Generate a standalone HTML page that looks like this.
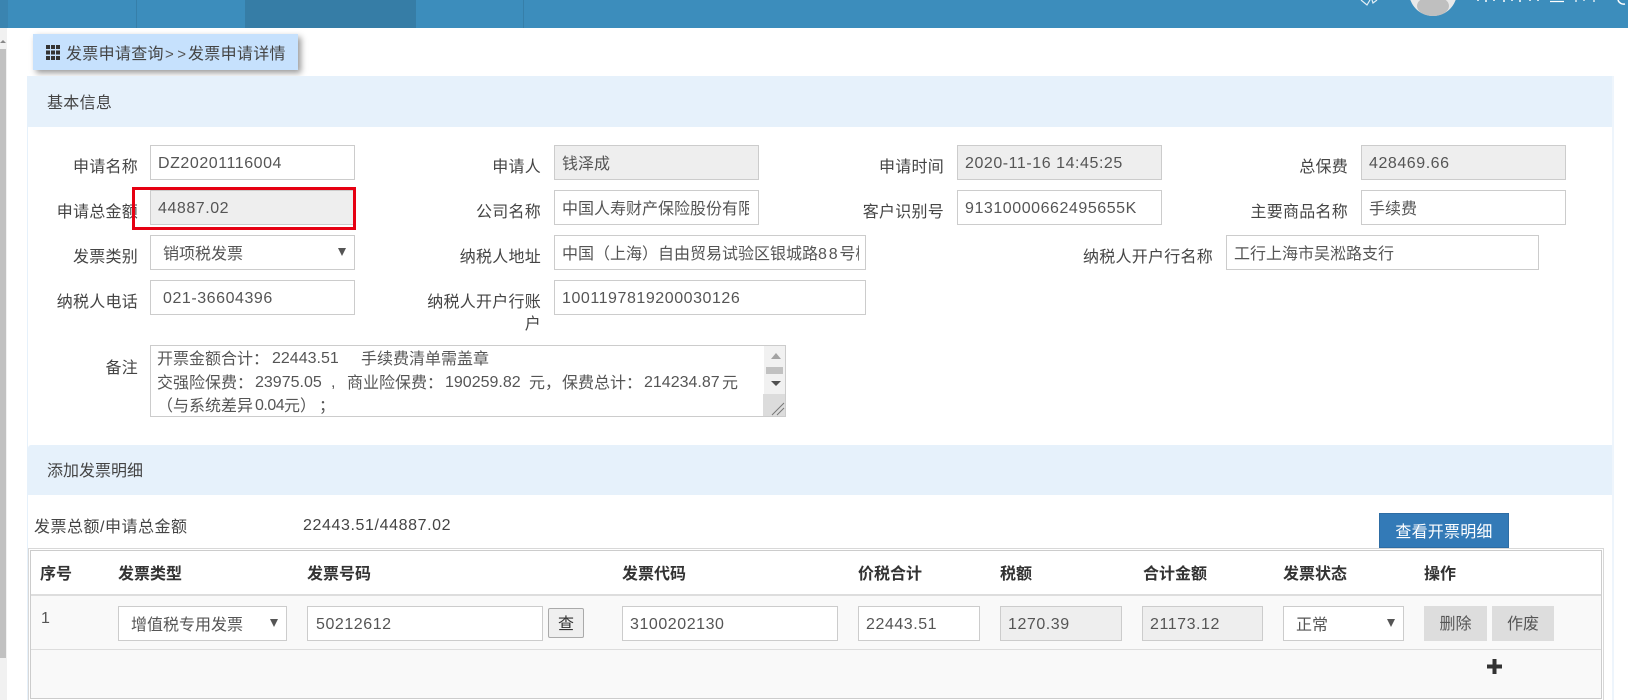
<!DOCTYPE html>
<html lang="zh-CN">
<head>
<meta charset="utf-8">
<title>发票申请详情</title>
<style>
html,body{margin:0;padding:0;background:#fff}
body{position:relative;width:1628px;height:700px;overflow:hidden;font:16px/24px "Liberation Sans","Noto Sans CJK SC",sans-serif;color:#444}
div,span{box-sizing:border-box}
.a{position:absolute}
.l{position:absolute;white-space:nowrap;text-align:right;height:35px;line-height:37px;color:#444;letter-spacing:.25px}
.i{position:absolute;height:35px;border:1px solid #ccc;background:#fff;color:#555;line-height:35px;padding-left:7px;white-space:nowrap;overflow:hidden}
.c{line-height:37px}
.g{background:#eee}
.n{letter-spacing:.55px}
.t{position:absolute;white-space:nowrap;color:#555;line-height:24px;height:24px}
.h{position:absolute;top:563px;line-height:24px;font-weight:bold;color:#333;white-space:nowrap}
.arr{position:absolute;width:0;height:0;border-left:4px solid transparent;border-right:4px solid transparent;border-top:8px solid #555}
.head{position:absolute;left:28px;width:1584px;background:#e6f1fb}
.btn{position:absolute;top:606px;height:35px;background:#ddd;color:#555;text-align:center;line-height:37px}
</style>
</head>
<body>
<!-- top bar -->
<div class="a" style="left:0;top:0;width:1628px;height:28px;background:#3c8dbc"></div>
<div class="a" style="left:0;top:0;width:8px;height:28px;background:#3a84b0"></div>
<div class="a" style="left:136px;top:0;width:1px;height:28px;background:#367fa9"></div>
<div class="a" style="left:245px;top:0;width:171px;height:28px;background:#367da6"></div>
<div class="a" style="left:523px;top:0;width:1px;height:28px;background:#367fa9"></div>
<svg class="a" style="left:1340px;top:0" width="288" height="28" viewBox="0 0 288 28">
  <path d="M21 0L27 5L30 0M32 0L33 3L37 0" fill="none" stroke="#e4eff6" stroke-width="1.2"/>
  <circle cx="93" cy="-8" r="24" fill="#e9e9e9"/>
  <ellipse cx="93" cy="6" rx="16" ry="10" fill="#bfbfbf"/>
  <path d="M138 0v1M146 0v2M154 0v1M164 0v2M172 0v1M180 0v2M190 0v1M198 0v1" stroke="#fff" stroke-width="1.5"/>
  <path d="M210 1.5h14M236 0v2M244 0v1M254 0v2" stroke="#fff" stroke-width="1.2" fill="none"/>
  <path d="M278 0a6 6 0 0 0 7 4" stroke="#fff" stroke-width="1.5" fill="none"/>
</svg>
<!-- left scrollbar -->
<div class="a" style="left:0;top:28px;width:7px;height:672px;background:#f1f1f1"></div>
<div class="a" style="left:0;top:49px;width:6px;height:609px;background:#c1c1c1"></div>
<div class="a" style="left:0;top:40px;width:0;height:0;border-left:3px solid transparent;border-right:3px solid transparent;border-bottom:3px solid #888"></div>
<!-- panel side borders -->
<div class="a" style="left:27px;top:76px;width:1px;height:624px;background:#e6f1fb"></div>
<div class="a" style="left:1612px;top:76px;width:2px;height:624px;background:#eef5fc"></div>
<!-- breadcrumb -->
<div class="a" style="left:33px;top:34px;width:265px;height:36px;background:#c6e1fd;box-shadow:3px 3px 6px rgba(0,0,0,.4)"></div>
<svg class="a" style="left:46px;top:45px" width="14" height="15" viewBox="0 0 14 15" fill="#333">
  <rect x="0" y="0" width="4" height="4"/><rect x="5" y="0" width="4" height="4"/><rect x="10" y="0" width="4" height="4"/>
  <rect x="0" y="5.5" width="4" height="4"/><rect x="5" y="5.5" width="4" height="4"/><rect x="10" y="5.5" width="4" height="4"/>
  <rect x="0" y="11" width="4" height="4"/><rect x="5" y="11" width="4" height="4"/><rect x="10" y="11" width="4" height="4"/>
</svg>
<div class="a" style="left:66px;top:43px;white-space:nowrap;color:#444;letter-spacing:.3px">发票申请查询</div>
<div class="a" style="left:165px;top:43px;white-space:nowrap;color:#555;font-size:15px;letter-spacing:3.5px">&gt;&gt;</div>
<div class="a" style="left:188px;top:43px;white-space:nowrap;color:#444;letter-spacing:.3px">发票申请详情</div>

<!-- section 1 -->
<div class="head" style="top:76px;height:51px"></div>
<div class="a" style="left:47px;top:92px;color:#444;letter-spacing:.3px">基本信息</div>

<!-- row 1 -->
<div class="l" style="right:1490px;top:149px">申请名称</div>
<div class="i n" style="left:150px;top:145px;width:205px">DZ20201116004</div>
<div class="l" style="right:1087px;top:149px">申请人</div>
<div class="i g c" style="left:554px;top:145px;width:205px">钱泽成</div>
<div class="l" style="right:684px;top:149px">申请时间</div>
<div class="i g n" style="left:957px;top:145px;width:205px">2020-11-16 14:45:25</div>
<div class="l" style="right:280px;top:149px">总保费</div>
<div class="i g n" style="left:1361px;top:145px;width:205px">428469.66</div>

<!-- row 2 -->
<div class="l" style="right:1490px;top:194px">申请总金额</div>
<div class="i g n" style="left:150px;top:190px;width:205px">44887.02</div>
<div class="l" style="right:1087px;top:194px">公司名称</div>
<div class="i c" style="left:554px;top:190px;width:205px"><span style="display:block;width:187px;overflow:hidden">中国人寿财产保险股份有限公司</span></div>
<div class="l" style="right:684px;top:194px">客户识别号</div>
<div class="i n" style="left:957px;top:190px;width:205px">91310000662495655K</div>
<div class="l" style="right:280px;top:194px">主要商品名称</div>
<div class="i c" style="left:1361px;top:190px;width:205px">手续费</div>

<!-- row 3 -->
<div class="l" style="right:1490px;top:239px">发票类别</div>
<div class="i c" style="left:150px;top:235px;width:205px;padding-left:12px">销项税发票</div>
<div class="arr" style="left:338px;top:248px"></div>
<div class="l" style="right:1087px;top:239px">纳税人地址</div>
<div class="i c" style="left:554px;top:235px;width:312px"><span style="display:block;width:297px;overflow:hidden">中国（上海）自由贸易试验区银城路<span style="letter-spacing:1.8px">88</span>号楼</span></div>
<div class="l" style="right:415px;top:239px">纳税人开户行名称</div>
<div class="i c" style="left:1226px;top:235px;width:313px">工行上海市吴淞路支行</div>

<!-- row 4 -->
<div class="l" style="right:1490px;top:284px">纳税人电话</div>
<div class="i n" style="left:150px;top:280px;width:205px;padding-left:12px">021-36604396</div>
<div class="a" style="right:1087px;top:292px;width:120px;text-align:right;line-height:22px;color:#444;letter-spacing:.25px">纳税人开户行账户</div>
<div class="i n" style="left:554px;top:280px;width:312px">1001197819200030126</div>

<!-- remark -->
<div class="l" style="right:1490px;top:350px">备注</div>
<div class="a" style="left:150px;top:345px;width:636px;height:72px;border:1px solid #ccc;background:#fff"></div>
<div class="t" style="left:157px;top:348px">开票金额合计：</div>
<div class="t" style="left:272px;top:347px">22443.51</div>
<div class="t" style="left:361px;top:348px">手续费清单需盖章</div>
<div class="t" style="left:157px;top:372px">交强险保费：</div>
<div class="t" style="left:255px;top:371px">23975.05</div>
<div class="t" style="left:331px;top:371px">,</div>
<div class="t" style="left:347px;top:372px">商业险保费：</div>
<div class="t" style="left:445px;top:371px">190259.82</div>
<div class="t" style="left:529px;top:372px">元，</div>
<div class="t" style="left:562px;top:372px">保费总计：</div>
<div class="t" style="left:644px;top:371px">214234.87</div>
<div class="t" style="left:722px;top:372px">元</div>
<div class="t" style="left:157px;top:395px">（与系统差异</div>
<div class="t" style="left:255px;top:394px;letter-spacing:-.5px">0.04</div>
<div class="t" style="left:284px;top:395px">元）</div>
<div class="t" style="left:319px;top:395px">；</div>
<div class="a" style="left:764px;top:346px;width:21px;height:48px;background:#f1f1f1"></div>
<div class="a" style="left:771px;top:353px;width:0;height:0;border-left:5px solid transparent;border-right:5px solid transparent;border-bottom:6px solid #a3a3a3"></div>
<div class="a" style="left:766px;top:367px;width:17px;height:7px;background:#c1c1c1"></div>
<div class="a" style="left:771px;top:381px;width:0;height:0;border-left:5px solid transparent;border-right:5px solid transparent;border-top:5px solid #505050"></div>
<svg class="a" style="left:763px;top:394px" width="22" height="22" viewBox="0 0 22 22">
  <rect width="22" height="22" fill="#dcdcdc"/>
  <path d="M9 21L21 9M14 21L21 14" stroke="#777" stroke-width="1" fill="none"/>
</svg>

<!-- section 2 -->
<div class="head" style="top:445px;height:50px;border-radius:3px 0 0 0"></div>
<div class="a" style="left:47px;top:460px;color:#444">添加发票明细</div>
<div class="a" style="left:34px;top:516px;white-space:nowrap;color:#444;letter-spacing:.5px">发票总额/申请总金额</div>
<div class="a" style="left:303px;top:514px;white-space:nowrap;color:#444;letter-spacing:.6px">22443.51/44887.02</div>

<!-- table -->
<div class="a" style="left:28px;top:548px;width:1576px;height:152px;border:1px solid #d8d8d8;border-bottom:0;background:#fff"></div>
<div class="a" style="left:30px;top:550px;width:1572px;height:149px;border:1px solid #ccc;background:#fff"></div>
<div class="a" style="left:31px;top:596px;width:1570px;height:102px;background:#f9f9f9"></div>
<div class="a" style="left:31px;top:594px;width:1570px;height:2px;background:#ddd"></div>
<div class="a" style="left:31px;top:649px;width:1570px;height:1px;background:#ddd"></div>

<div class="h" style="left:40px">序号</div>
<div class="h" style="left:118px">发票类型</div>
<div class="h" style="left:307px">发票号码</div>
<div class="h" style="left:622px">发票代码</div>
<div class="h" style="left:858px">价税合计</div>
<div class="h" style="left:1000px">税额</div>
<div class="h" style="left:1143px">合计金额</div>
<div class="h" style="left:1283px">发票状态</div>
<div class="h" style="left:1424px">操作</div>

<div class="a" style="left:41px;top:607px;color:#555">1</div>
<div class="i c" style="left:118px;top:606px;width:169px;padding-left:12px">增值税专用发票</div>
<div class="arr" style="left:270px;top:619px"></div>
<div class="i n" style="left:307px;top:606px;width:236px;padding-left:8px">50212612</div>
<div class="a" style="left:548px;top:608px;width:36px;height:30px;border:1px solid #aaa;border-radius:2px;background:#efefef;color:#333;text-align:center;line-height:31px">查</div>
<div class="i n" style="left:622px;top:606px;width:216px">3100202130</div>
<div class="i n" style="left:858px;top:606px;width:122px">22443.51</div>
<div class="i g n" style="left:1000px;top:606px;width:122px">1270.39</div>
<div class="i g n" style="left:1142px;top:606px;width:121px">21173.12</div>
<div class="i c" style="left:1283px;top:606px;width:121px;padding-left:12px">正常</div>
<div class="arr" style="left:1387px;top:619px"></div>
<div class="btn" style="left:1424px;width:63px">删除</div>
<div class="btn" style="left:1492px;width:62px">作废</div>
<svg class="a" style="left:1487px;top:659px" width="15" height="15" viewBox="0 0 15 15"><path d="M5.500 0h4v5.500h5.500v4H9.500v5.500h-4V9.500H0v-4h5.500z" fill="#333"/></svg>

<div class="a" style="left:1379px;top:513px;width:130px;height:35px;background:#337ab7;border:1px solid #2e6da4;color:#fff;text-align:center;line-height:38px;letter-spacing:.2px">查看开票明细</div>

<!-- red highlight -->
<div class="a" style="left:132px;top:187px;width:224px;height:43px;border:3px solid #e60012"></div>
</body>
</html>
